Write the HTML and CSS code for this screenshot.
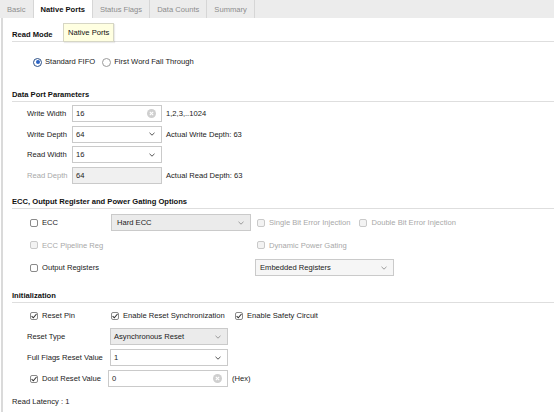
FILE: index.html
```html
<!DOCTYPE html>
<html>
  <head>
    <title>Native Ports</title>
    <link rel="stylesheet" href="styles.css">
  </head>
  <body>
    <div class="tabs">
      <div class="tab">Basic</div>
      <div class="tab tab-active">Native Ports</div>
      <div class="tab">Status Flags</div>
      <div class="tab">Data Counts</div>
      <div class="tab">Summary</div>
    </div>

    <div class="panel">
      <div class="tooltip">Native Ports</div>

      <!-- read mode -->
      <div class="group">
        <div class="group-title">Read Mode</div>
        <div class="radio-row">
          <label class="radio"><span class="dot dot-on"></span>Standard FIFO</label>
          <label class="radio"><span class="dot"></span>First Word Fall Through</label>
        </div>
      </div>

      <!-- data port -->
      <div class="group group-data">
        <div class="group-title">Data Port Parameters</div>
        <div class="param-grid">
          <span>Write Width</span>
          <div class="field">
            <span>16</span>
            <svg class="clear" width="9" height="9" viewBox="0 0 9 9"><circle cx="4.5" cy="4.5" r="4.5" fill="#cfcfcf"/><path d="M2.8 2.8l3.4 3.4M6.2 2.8l-3.4 3.4" stroke="#fff" stroke-width="1.1"/></svg>
          </div>
          <span class="note">1,2,3,..1024</span>

          <span>Write Depth</span>
          <div class="field">
            <span>64</span>
            <svg class="chev" width="6" height="4" viewBox="0 0 6 4"><path d="M0.5 0.8L3 3.2L5.5 0.8" fill="none" stroke="#555"/></svg>
          </div>
          <span class="note">Actual Write Depth: 63</span>

          <span>Read Width</span>
          <div class="field">
            <span>16</span>
            <svg class="chev" width="6" height="4" viewBox="0 0 6 4"><path d="M0.5 0.8L3 3.2L5.5 0.8" fill="none" stroke="#555"/></svg>
          </div>
          <span></span>

          <span class="muted">Read Depth</span>
          <div class="field field-off"><span>64</span></div>
          <span class="note">Actual Read Depth: 63</span>
        </div>
      </div>

      <!-- ecc -->
      <div class="group group-ecc">
        <div class="group-title">ECC, Output Register and Power Gating Options</div>
        <div class="opt-grid">
          <label class="check"><span class="box"></span>ECC</label>
          <div class="field field-gray field-ecc">
            <span>Hard ECC</span>
            <svg class="chev" width="6" height="4" viewBox="0 0 6 4"><path d="M0.5 0.8L3 3.2L5.5 0.8" fill="none" stroke="#9a9a9a"/></svg>
          </div>
          <div class="check-pair">
            <label class="check check-off"><span class="box"></span>Single Bit Error Injection</label>
            <label class="check check-off"><span class="box"></span>Double Bit Error Injection</label>
          </div>

          <label class="check check-off"><span class="box"></span>ECC Pipeline Reg</label>
          <span></span>
          <label class="check check-off"><span class="box"></span>Dynamic Power Gating</label>

          <label class="check span-2"><span class="box"></span>Output Registers</label>
          <div class="field field-light field-reg">
            <span>Embedded Registers</span>
            <svg class="chev" width="6" height="4" viewBox="0 0 6 4"><path d="M0.5 0.8L3 3.2L5.5 0.8" fill="none" stroke="#9a9a9a"/></svg>
          </div>
        </div>
      </div>

      <!-- initialization -->
      <div class="group group-init">
        <div class="group-title">Initialization</div>
        <div class="init-grid">
          <label class="check indent"><span class="box box-on"><svg width="8" height="8" viewBox="0 0 8 8"><path d="M1.6 4.1l1.7 1.7 3.2-3.8" fill="none" stroke="#333" stroke-width="1.1"/></svg></span>Reset Pin</label>
          <label class="check indent-1"><span class="box box-on"><svg width="8" height="8" viewBox="0 0 8 8"><path d="M1.6 4.1l1.7 1.7 3.2-3.8" fill="none" stroke="#333" stroke-width="1.1"/></svg></span>Enable Reset Synchronization</label>
          <label class="check indent-safety"><span class="box box-on"><svg width="8" height="8" viewBox="0 0 8 8"><path d="M1.6 4.1l1.7 1.7 3.2-3.8" fill="none" stroke="#333" stroke-width="1.1"/></svg></span>Enable Safety Circuit</label>

          <span>Reset Type</span>
          <div class="field field-gray">
            <span>Asynchronous Reset</span>
            <svg class="chev" width="6" height="4" viewBox="0 0 6 4"><path d="M0.5 0.8L3 3.2L5.5 0.8" fill="none" stroke="#9a9a9a"/></svg>
          </div>
          <span></span>

          <span>Full Flags Reset Value</span>
          <div class="field">
            <span>1</span>
            <svg class="chev" width="6" height="4" viewBox="0 0 6 4"><path d="M0.5 0.8L3 3.2L5.5 0.8" fill="none" stroke="#555"/></svg>
          </div>
          <span></span>

          <label class="check indent"><span class="box box-on"><svg width="8" height="8" viewBox="0 0 8 8"><path d="M1.6 4.1l1.7 1.7 3.2-3.8" fill="none" stroke="#333" stroke-width="1.1"/></svg></span>Dout Reset Value</label>
          <div class="field field-dout">
            <span>0</span>
            <svg class="clear" width="9" height="9" viewBox="0 0 9 9"><circle cx="4.5" cy="4.5" r="4.5" fill="#cfcfcf"/><path d="M2.8 2.8l3.4 3.4M6.2 2.8l-3.4 3.4" stroke="#fff" stroke-width="1.1"/></svg>
          </div>
          <span class="note">(Hex)</span>
        </div>
      </div>

      <div class="latency">Read Latency : 1</div>
    </div>
  </body>
</html>
```

FILE: styles.css
```css
body {
  margin: 0;
  font-family: "Liberation Sans", Arial, sans-serif;
  font-size: 7.6px;
  color: #1a1a1a;
  background: #ffffff;
}

/* tab strip */
.tabs {
  display: flex;
  height: 18px;
  background: #ececec;
}
.tab {
  display: flex;
  align-items: center;
  padding: 0 7px;
  color: #8c8c8c;
  border-right: 1px solid #d6d6d6;
}
.tab-active {
  background: #ffffff;
  color: #111;
  font-weight: bold;
}

/* panel */
.panel {
  position: relative;
  margin-left: 1px;
  border-left: 2px solid #dadada;
  padding: 12px 0 0 9px;
  min-height: calc(100vh - 30px);
}
.tooltip {
  position: absolute;
  left: 60px;
  top: 5px;
  height: 17px;
  padding: 0 4px;
  display: flex;
  align-items: center;
  background: #ffffe1;
  border: 1px solid #d6d6c4;
  box-shadow: 1px 1px 1px rgba(0, 0, 0, 0.08);
  color: #111;
}

.group-title {
  font-weight: bold;
  color: #111;
  line-height: 10px;
  padding-bottom: 1px;
  border-bottom: 1px solid #dedede;
}
.group-data {
  margin-top: 23px;
}
.group-ecc {
  margin-top: 13.5px;
}
.group-init {
  margin-top: 15px;
}

/* radios */
.radio-row {
  display: flex;
  gap: 7px;
  margin: 15px 0 0 21px;
  line-height: 10px;
}
.radio {
  display: flex;
  align-items: center;
}
.dot {
  width: 9px;
  height: 9px;
  box-sizing: border-box;
  border: 1px solid #9a9a9a;
  border-radius: 50%;
  margin-right: 3px;
  background: #fff;
  position: relative;
}
.dot-on {
  border-color: #2b4f86;
}
.dot-on::after {
  content: "";
  position: absolute;
  left: 1.5px;
  top: 1.5px;
  width: 4px;
  height: 4px;
  border-radius: 50%;
  background: #2a62c4;
}

/* fields */
.field {
  display: flex;
  align-items: center;
  justify-content: space-between;
  box-sizing: border-box;
  height: 17px;
  border: 1px solid #cacaca;
  padding: 0 6px 0 3px;
  background: #ffffff;
  color: #1a1a1a;
}
.field-off {
  background: #f0f0f0;
}
.field-gray {
  background: #ebebeb;
}
.field-light {
  background: #f6f6f6;
}
.field-ecc {
  width: 140px;
  padding-left: 5px;
}
.field-reg {
  width: 139px;
  margin-left: -2px;
  padding-left: 4px;
}
.field-dout {
  margin-left: -2px;
}
.clear {
  margin-right: -1px;
}
.note {
  margin-left: 4px;
}
.muted {
  color: #a8a8a8;
}

.param-grid {
  display: grid;
  grid-template-columns: 45px 90px auto;
  grid-auto-rows: 17px;
  row-gap: 3.6px;
  align-items: center;
  margin-top: 3px;
  padding-left: 15px;
}

/* checkboxes */
.check {
  display: flex;
  align-items: center;
  white-space: nowrap;
}
.box {
  display: flex;
  align-items: center;
  justify-content: center;
  width: 8px;
  height: 8px;
  box-sizing: border-box;
  border: 1px solid #8a8a8a;
  border-radius: 2px;
  background: #fff;
  margin-right: 4px;
}
.box svg {
  flex: none;
}
.check-off {
  color: #a8a8a8;
}
.check-off .box {
  border-color: #c9c9c9;
  background: #f3f3f3;
}
.check-pair {
  display: flex;
  gap: 9px;
}
.span-2 {
  grid-column: span 2;
}

.opt-grid {
  display: grid;
  grid-template-columns: 81px 146px auto;
  grid-auto-rows: 17px;
  row-gap: 5.5px;
  align-items: center;
  margin-top: 5px;
  padding-left: 18px;
}

.init-grid {
  display: grid;
  grid-template-columns: 83px 118px auto;
  grid-auto-rows: 17px;
  row-gap: 4px;
  align-items: center;
  margin-top: 4px;
  padding-left: 15px;
}
.indent {
  margin-left: 3px;
}
.indent-1 {
  margin-left: 1px;
}
.indent-safety {
  margin-left: 7px;
}

.latency {
  margin-top: 10px;
  line-height: 10px;
}
```
